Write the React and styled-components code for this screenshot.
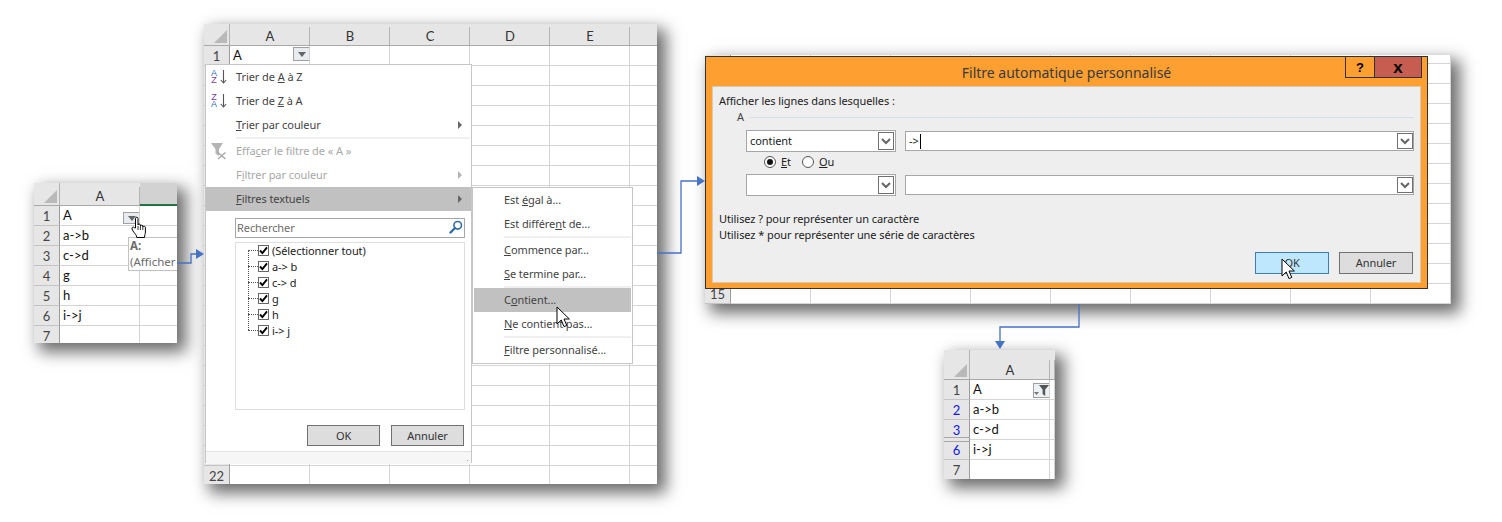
import React from 'react';
import styled, { createGlobalStyle } from 'styled-components';

const UI_FONT = '"Noto Sans", "Open Sans", sans-serif';
const CELL_FONT = 'Lato, "Open Sans", sans-serif';

const GlobalStyle = createGlobalStyle`
  html, body {
    margin: 0;
    padding: 0;
    background: #fff;
  }
`;

const Canvas = styled.div`
  position: relative;
  width: 1502px;
  height: 522px;
  overflow: hidden;
  background: #fff;
  font-family: ${UI_FONT};
`;

const SheetWindow = styled.div`
  position: absolute;
  left: ${props => props.$x}px;
  top: ${props => props.$y}px;
  width: ${props => props.$w}px;
  height: ${props => props.$h}px;
  overflow: hidden;
  background: #fff;
  box-shadow: 7px 7px 15px 2px rgba(0,0,0,.58);
`;

const SheetGrid = styled.div`
  display: grid;
  grid-template-columns: ${props => props.$columns};
  grid-template-rows: ${props => props.$firstRow}px;
  grid-auto-rows: 20px;
  font-family: ${CELL_FONT};
  font-size: 13px;
  color: #111;
`;

const Corner = styled.div`
  position: relative;
  background: #e6e6e6;
  border-bottom: 1px solid #a8a8a8;
  border-right: 1px solid #b4b4b4;
  box-sizing: border-box;

  &::before {
    content: '';
    position: absolute;
    right: 2px;
    bottom: 2px;
    width: 13px;
    height: 13px;
    background: #b9b9b9;
    clip-path: polygon(100% 0, 100% 100%, 0 100%);
  }
`;

const ColumnHeader = styled.div`
  position: relative;
  padding-top: ${props => props.$strip}px;
  box-sizing: border-box;
  display: flex;
  align-items: center;
  justify-content: center;
  background: ${props => props.$selected ? '#d2d2d2' : '#e6e6e6'};
  border-bottom: ${props => props.$selected ? '2px solid #217346' : '1px solid #a8a8a8'};
  color: #333;

  &::after {
    content: '';
    position: absolute;
    right: 0;
    top: ${props => props.$strip}px;
    bottom: 0;
    width: 1px;
    background: #b4b4b4;
  }
`;

// the two lines round a gap of hidden rows are drawn as inset shadows
const RowHeader = styled.div`
  display: flex;
  align-items: center;
  justify-content: center;
  box-sizing: border-box;
  background: #e6e6e6;
  border-right: 1px solid #9c9c9c;
  border-bottom: ${props => props.$gapAfter ? 'none' : '1px solid #c4c4c4'};
  box-shadow: ${props =>
    props.$gapAfter ? 'inset 0 -2px 0 #e6e6e6, inset 0 -3px 0 #a8a8a8'
    : props.$gapBefore ? 'inset 0 1px 0 #e6e6e6, inset 0 2px 0 #a8a8a8'
    : 'none'};
  color: ${props => props.$filtered ? '#1414e6' : '#444'};
`;

const Cell = styled.div`
  display: flex;
  align-items: flex-start;
  box-sizing: border-box;
  padding-left: 3px;
  line-height: 19px;
  white-space: nowrap;
  overflow: hidden;
  border-right: 1px solid #d4d4d4;
  border-bottom: 1px solid #d4d4d4;
`;

const FilterButton = styled.div`
  display: flex;
  align-items: center;
  justify-content: center;
  box-sizing: border-box;
  flex: 0 0 17px;
  height: ${props => props.$height}px;
  margin: ${props => props.$top}px -1px 0 auto;
  background: ${props => props.$active ? '#eef1f3' : '#e8ebef'};
  border: 1px solid #a0a0a0;
`;

const DownTriangle = styled.span`
  width: 0;
  height: 0;
  border-left: 4px solid transparent;
  border-right: 4px solid transparent;
  border-top: 5px solid #666;
`;

const CommentTip = styled.div`
  position: absolute;
  left: 94px;
  top: 54px;
  width: 60px;
  height: 34px;
  box-sizing: border-box;
  padding: 0 0 0 1px;
  background: #fff;
  border: 1px solid #c2c2c2;
  font-family: ${UI_FONT};
  font-size: 11.5px;
  line-height: 16px;
  color: #6d6d6d;
  white-space: nowrap;
`;

const CommentTitle = styled.div`
  font-weight: 700;
`;

const Menu = styled.div`
  position: absolute;
  left: ${props => props.$x}px;
  top: ${props => props.$y}px;
  width: ${props => props.$w}px;
  height: ${props => props.$h}px;
  box-sizing: border-box;
  background: #fff;
  border: 1px solid #c6c6c6;
  font-size: 11px;
  letter-spacing: -.08px;
  color: #444;
`;

const MenuItem = styled.div`
  position: relative;
  display: flex;
  align-items: center;
  box-sizing: border-box;
  height: 24px;
  padding-bottom: 2px;
  white-space: nowrap;
  color: ${props => props.$disabled ? '#a8a8a8' : 'inherit'};
  background: ${props => props.$active ? '#c1c1c1' : 'transparent'};
  margin: ${props => props.$inset ? '0 1px 0 1px' : '0'};
`;

const IconSlot = styled.span`
  flex: 0 0 ${props => props.$width}px;
  display: flex;
  align-items: center;
  gap: 3px;
  padding: 2px 0 0 5px;
  box-sizing: border-box;
`;

const SubArrow = styled.span`
  position: absolute;
  right: 9px;
  top: 8px;
  border-left: 4px solid ${props => props.$disabled ? '#b4b4b4' : '#666'};
  border-top: 4px solid transparent;
  border-bottom: 4px solid transparent;
`;

const Separator = styled.div`
  height: 2px;
  margin-left: ${props => props.$inset}px;
  margin-right: 1px;
  background: #e2e2e2;
  transform: scaleY(.5);
`;

const SortLetters = styled.span`
  display: flex;
  flex-direction: column;
  align-items: center;
  font-family: "Liberation Sans", sans-serif;
  font-size: 9px;
  line-height: 7.5px;
  letter-spacing: 0;
`;

const SortLetter = styled.span`
  color: ${props => props.$purple ? '#7a3e9d' : '#2f6fb5'};
`;

const SearchBox = styled.div`
  display: flex;
  align-items: center;
  justify-content: space-between;
  box-sizing: border-box;
  width: 230px;
  height: 20px;
  margin: 7px 0 0 29px;
  padding: 0 1px 2px 1px;
  border: 1px solid #a6a6a6;
  color: #6d6d6d;
`;

const TreeBox = styled.div`
  position: relative;
  box-sizing: border-box;
  width: 230px;
  height: 168px;
  margin: 4px 0 0 29px;
  border: 1px solid #dedede;
`;

const TreeLine = styled.div`
  position: absolute;
  left: 12px;
  top: 7px;
  height: 80px;
  border-left: 1px dotted #555;
`;

const TreeRows = styled.div`
  margin-top: -1px;
`;

const TreeRow = styled.div`
  display: flex;
  align-items: center;
  height: 16px;
  padding-left: 12px;
  color: #222;
  white-space: nowrap;

  &::before {
    content: '';
    width: 10px;
    border-top: 1px dotted #555;
  }
`;

const CheckBox = styled.span`
  display: flex;
  align-items: center;
  justify-content: center;
  box-sizing: border-box;
  width: 11px;
  height: 11px;
  margin-right: 3px;
  background: #fff;
  border: 1px solid #666;
`;

const MenuButtons = styled.div`
  display: flex;
  justify-content: flex-end;
  gap: 11px;
  margin: 15px 7px 0 0;
`;

const PushButton = styled.div`
  display: flex;
  align-items: center;
  justify-content: center;
  box-sizing: border-box;
  width: ${props => props.$w}px;
  height: ${props => props.$height}px;
  padding-bottom: 1px;
  font-size: 11px;
  color: #333;
  background: ${props => props.$hot ? '#bee6fd' : '#dddddd'};
  border: 1px solid ${props => props.$hot ? '#3c7fb1' : '#707070'};
`;

const GripBar = styled.div`
  position: relative;
  height: 12px;
  margin-top: 5px;
  background: #f6f6f6;
  border-top: 1px solid #e2e2e2;
`;

const Grip = styled.span`
  position: absolute;
  right: 1px;
  bottom: 1px;
  width: 7px;
  height: 7px;
  background: radial-gradient(circle, #9a9a9a 1px, transparent 1px) 0 0 / 3px 3px;
  clip-path: polygon(100% 0, 100% 100%, 0 100%);
`;

const Dialog = styled.div`
  position: absolute;
  left: 705px;
  top: 56px;
  width: 723px;
  height: 233px;
  box-sizing: border-box;
  background: #fd9f31;
  border: 1px solid #333;
  display: flex;
  flex-direction: column;
`;

const TitleBar = styled.div`
  position: relative;
  flex: 0 0 30px;
  display: flex;
  align-items: center;
  justify-content: center;
  font-size: 14px;
  color: #3a3a3a;
`;

const TitleButtons = styled.div`
  position: absolute;
  top: 0;
  right: 5px;
  display: flex;
  height: 21px;
  border: 1px solid #333;
  border-top: none;
  box-sizing: border-box;
`;

const TitleButton = styled.div`
  display: flex;
  align-items: center;
  justify-content: center;
  box-sizing: border-box;
  width: ${props => props.$w}px;
  background: ${props => props.$close ? '#c65d50' : 'transparent'};
  border-left: ${props => props.$close ? '1px solid #333' : 'none'};
  font-family: "Liberation Sans", sans-serif;
  font-size: ${props => props.$close ? '17px' : '13px'};
  line-height: 1;
  font-weight: 700;
  color: #000;
`;

const Panel = styled.div`
  flex: 1;
  margin: 0 7px 6px;
  padding: 6px 6px 0;
  background: #eeeeee;
  box-shadow: 0 0 0 1px #d8c9b4;
  font-size: 11px;
  letter-spacing: -.08px;
  line-height: 16px;
  color: #222;
`;

const Legend = styled.div`
  display: flex;
  align-items: center;
  gap: 5px;
  margin-left: 18px;
  color: #444;

  &::after {
    content: '';
    flex: 1;
    height: 1px;
    background: #d5dfe6;
  }
`;

const CriteriaRow = styled.div`
  display: flex;
  align-items: center;
  gap: 9px;
  margin: ${props => props.$top}px 0 0 27px;
`;

const Combo = styled.div`
  display: flex;
  align-items: center;
  justify-content: space-between;
  box-sizing: border-box;
  width: 150px;
  height: 22px;
  padding: 0 1px 0 3px;
  background: #fff;
  border: 1px solid #a6a6a6;
`;

const TextField = styled.div`
  flex: 1;
  display: flex;
  align-items: center;
  box-sizing: border-box;
  height: 20px;
  padding-left: 3px;
  background: #fff;
  border: 1px solid #a6a6a6;
`;

const Caret = styled.span`
  width: 1px;
  height: 15px;
  margin-left: 1px;
  background: #000;
`;

const DropButton = styled.span`
  display: flex;
  align-items: center;
  justify-content: center;
  box-sizing: border-box;
  width: ${props => props.$w}px;
  height: ${props => props.$h}px;
  margin-left: auto;
  background: #fff;
  border: 1px solid #707070;
`;

const RadioRow = styled.div`
  display: flex;
  align-items: center;
  height: 20px;
  margin-left: 45px;
`;

const Radio = styled.span`
  display: flex;
  align-items: center;
  justify-content: center;
  box-sizing: border-box;
  width: 12px;
  height: 12px;
  margin-right: 5px;
  background: #fff;
  border: 1px solid #555;
  border-radius: 50%;

  &::after {
    content: '';
    display: ${props => props.$checked ? 'block' : 'none'};
    width: 6px;
    height: 6px;
    border-radius: 50%;
    background: #111;
  }
`;

const RadioLabel = styled.span`
  margin-right: ${props => props.$gap || 0}px;
`;

const Notes = styled.div`
  margin-top: 15px;
`;

const DialogButtons = styled.div`
  display: flex;
  justify-content: flex-end;
  gap: 10px;
  margin: 9px 1px 0 0;
`;

const Overlay = styled.svg`
  position: absolute;
  left: ${props => props.$x}px;
  top: ${props => props.$y}px;
  overflow: visible;
  pointer-events: none;
`;

const sortIcon = (top, bottom, topPurple) => (
  <IconSlot $width={30}>
    <SortLetters>
      <SortLetter $purple={topPurple}>{top}</SortLetter>
      <SortLetter $purple={!topPurple}>{bottom}</SortLetter>
    </SortLetters>
    <svg width="7" height="14" viewBox="0 0 7 14">
      <path d="M3.5 0v13M.8 10l2.7 3 2.7-3" fill="none" stroke="#555" strokeWidth="1.1" />
    </svg>
  </IconSlot>
);

const ClearFilterIcon = () => (
  <IconSlot $width={30}>
    <svg width="16" height="17" viewBox="0 0 16 17">
      <path d="M0 0h12L8 6v7L4.5 10.5V6z" fill="#b4b4b4" />
      <path d="M7 9.5l7.5 6.5M14.5 9.5L7 16" stroke="#a8a8a8" strokeWidth="1.4" />
    </svg>
  </IconSlot>
);

const SearchIcon = () => (
  <svg width="14" height="14" viewBox="0 0 14 14">
    <circle cx="8.7" cy="5.3" r="3.8" fill="none" stroke="#2f6ea5" strokeWidth="1.6" />
    <path d="M6 8L1.5 12.5" stroke="#2f6ea5" strokeWidth="2.4" strokeLinecap="round" />
  </svg>
);

const CheckMark = () => (
  <svg width="9" height="9" viewBox="0 0 9 9">
    <path d="M1 4.5l2.4 2.6L8 1.4" fill="none" stroke="#000" strokeWidth="1.9" />
  </svg>
);

const Chevron = () => (
  <svg width="10" height="7" viewBox="0 0 10 7">
    <path d="M1 1l4 4 4-4" fill="none" stroke="#666" strokeWidth="2" />
  </svg>
);

const ActiveFilterIcon = () => (
  <svg width="15" height="11" viewBox="0 0 15 11">
    <path d="M5 0h10l-3.8 4.4V11L8.6 9V4.4z" fill="#555" />
    <path d="M0 7h5L2.5 10z" fill="#777" />
  </svg>
);

const ArrowCursor = ({ x, y }) => (
  <Overlay $x={x} $y={y} width="14" height="22" viewBox="0 0 14 22">
    <path d="M1 1v17l4.2-4 2.8 6.6 2.8-1.2-2.8-6.4H13.4z" fill="#fff" stroke="#000" strokeWidth="1" />
  </Overlay>
);

const HandCursor = ({ x, y }) => (
  <Overlay $x={x} $y={y} width="17" height="23" viewBox="0 0 17 23">
    <path
      d="M4.5 12V2.5C4.5.8 7 .8 7 2.5V9C7 7.8 9.4 7.8 9.4 9v1c0-1.1 2.4-1.1 2.4 0v1c0-1 2.6-1 2.6.3V16c0 2.2-.9 3-.9 5.5H5.8C5.8 19 3.6 17.6 2 15l-1-2c-.7-1.6 1.4-2.6 2.3-1.3z"
      fill="#fff"
      stroke="#000"
      strokeWidth="1"
    />
    <path d="M7 10v4M9.4 10v4M11.8 11v3" stroke="#000" strokeWidth=".8" />
  </Overlay>
);

const Connector = ({ d, arrow }) => (
  <>
    <path d={d} fill="none" stroke="#4472c4" strokeWidth="1.3" />
    <polygon points={arrow} fill="#4472c4" />
  </>
);

// one block of cells, the same shape for every sheet in the picture
const Sheet = ({ x, y, w, h, columns, headerHeight, strip, labels, rows, selectedFrom, firstRow, children }) => (
  <SheetWindow $x={x} $y={y} $w={w} $h={h}>
    <SheetGrid $columns={columns} $firstRow={firstRow || headerHeight}>
      {headerHeight && <Corner />}
      {headerHeight && labels.map((label, i) => (
        <ColumnHeader
          key={i}
          $strip={strip}
          $selected={selectedFrom !== undefined && i >= selectedFrom}
        >
          {label}
        </ColumnHeader>
      ))}
      {rows.map((row, r) => (
        <React.Fragment key={r}>
          <RowHeader $filtered={row.filtered} $gapAfter={row.gapAfter} $gapBefore={row.gapBefore}>
            {row.num}
          </RowHeader>
          {labels.map((_, c) => (
            <Cell key={c}>
              {row.cells && row.cells[c]}
            </Cell>
          ))}
        </React.Fragment>
      ))}
    </SheetGrid>
    {children}
  </SheetWindow>
);

const range = (from, to) => {
  const out = [];
  for (let i = from; i <= to; i++) out.push({ num: i });
  return out;
};

const plainButton = (top, height) => (
  <FilterButton $top={top} $height={height}><DownTriangle /></FilterButton>
);

const firstRows = [
  { num: 1, cells: [<React.Fragment key="a">A{plainButton(6, 12)}</React.Fragment>] },
  { num: 2, cells: ['a->b'] },
  { num: 3, cells: ['c->d'] },
  { num: 4, cells: ['g'] },
  { num: 5, cells: ['h'] },
  { num: 6, cells: ['i->j'] },
  { num: 7 },
];

const secondRows = [
  { num: 1, cells: [<React.Fragment key="a">A{plainButton(1, 14)}</React.Fragment>] },
  ...range(2, 22),
];

const behindRows = [
  ...Array.from({ length: 12 }, () => ({ num: '' })),
  { num: 15 },
];

const resultRows = [
  {
    num: 1,
    cells: [
      <React.Fragment key="a">
        A
        <FilterButton $top={3} $height={15} $active><ActiveFilterIcon /></FilterButton>
      </React.Fragment>,
    ],
  },
  { num: 2, filtered: true, cells: ['a->b'] },
  { num: 3, filtered: true, gapAfter: true, cells: ['c->d'] },
  { num: 6, filtered: true, gapBefore: true, cells: ['i->j'] },
  { num: 7 },
];

const treeItems = ['(Sélectionner tout)', 'a-> b', 'c-> d', 'g', 'h', 'i-> j'];

const App = () => (
  <Canvas>
    <GlobalStyle />

    <Sheet
      x={34} y={183} w={143} h={160}
      columns="26px 80px 60px"
      headerHeight={23}
      strip={4}
      labels={['A', '']}
      selectedFrom={1}
      rows={firstRows}
    >
      <CommentTip>
        <CommentTitle>A:</CommentTitle>
        (Afficher
      </CommentTip>
    </Sheet>
    <HandCursor x={131} y={216} />

    <Sheet
      x={204} y={24} w={453} h={460}
      columns="26px repeat(6, 80px)"
      headerHeight={22}
      strip={3}
      labels={['A', 'B', 'C', 'D', 'E', '']}
      rows={secondRows}
    />

    <Menu $x={205} $y={64} $w={267} $h={399}>
      <MenuItem>{sortIcon('A', 'Z', false)}<span>Trier de <u>A</u> à Z</span></MenuItem>
      <MenuItem>{sortIcon('Z', 'A', true)}<span>Trier de <u>Z</u> à A</span></MenuItem>
      <MenuItem>
        <IconSlot $width={30} /><span><u>T</u>rier par couleur</span><SubArrow />
      </MenuItem>
      <Separator $inset={30} />
      <MenuItem $disabled><ClearFilterIcon /><span>Effa<u>c</u>er le filtre de « A »</span></MenuItem>
      <MenuItem $disabled>
        <IconSlot $width={30} /><span>F<u>i</u>ltrer par couleur</span><SubArrow $disabled />
      </MenuItem>
      <MenuItem $active>
        <IconSlot $width={30} /><span><u>F</u>iltres textuels</span><SubArrow />
      </MenuItem>
      <SearchBox>Rechercher<SearchIcon /></SearchBox>
      <TreeBox>
        <TreeLine />
        <TreeRows>
          {treeItems.map(item => (
            <TreeRow key={item}>
              <CheckBox><CheckMark /></CheckBox>
              {item}
            </TreeRow>
          ))}
        </TreeRows>
      </TreeBox>
      <MenuButtons>
        <PushButton $w={73} $height={21}>OK</PushButton>
        <PushButton $w={73} $height={21}>Annuler</PushButton>
      </MenuButtons>
      <GripBar><Grip /></GripBar>
    </Menu>

    <Menu $x={472} $y={187} $w={161} $h={177}>
      <MenuItem><IconSlot $width={31} /><span>Est <u>é</u>gal à...</span></MenuItem>
      <MenuItem><IconSlot $width={31} /><span>Est différe<u>n</u>t de...</span></MenuItem>
      <Separator $inset={31} />
      <MenuItem><IconSlot $width={31} /><span><u>C</u>ommence par...</span></MenuItem>
      <MenuItem><IconSlot $width={31} /><span><u>S</u>e termine par...</span></MenuItem>
      <Separator $inset={31} />
      <MenuItem $active $inset><IconSlot $width={30} /><span>C<u>o</u>ntient...</span></MenuItem>
      <MenuItem><IconSlot $width={31} /><span><u>N</u>e contient pas...</span></MenuItem>
      <Separator $inset={31} />
      <MenuItem><IconSlot $width={31} /><span><u>F</u>iltre personnalisé...</span></MenuItem>
    </Menu>
    <ArrowCursor x={556} y={306} />

    <Sheet
      x={705} y={55} w={746} h={249}
      columns="26px repeat(9, 80px)"
      firstRow={9}
      labels={['', '', '', '', '', '', '', '', '']}
      rows={behindRows}
    />

    <Dialog>
      <TitleBar>
        Filtre automatique personnalisé
        <TitleButtons>
          <TitleButton $w={28}>?</TitleButton>
          <TitleButton $w={47} $close>x</TitleButton>
        </TitleButtons>
      </TitleBar>
      <Panel>
        <div>Afficher les lignes dans lesquelles :</div>
        <Legend>A</Legend>
        <CriteriaRow $top={5}>
          <Combo>contient<DropButton $w={16} $h={18}><Chevron /></DropButton></Combo>
          <TextField>-&gt;<Caret /><DropButton $w={16} $h={16}><Chevron /></DropButton></TextField>
        </CriteriaRow>
        <RadioRow>
          <Radio $checked /><RadioLabel $gap={11}><u>E</u>t</RadioLabel>
          <Radio /><RadioLabel><u>O</u>u</RadioLabel>
        </RadioRow>
        <CriteriaRow $top={2}>
          <Combo><DropButton $w={16} $h={18}><Chevron /></DropButton></Combo>
          <TextField><DropButton $w={16} $h={16}><Chevron /></DropButton></TextField>
        </CriteriaRow>
        <Notes>
          <div>Utilisez ? pour représenter un caractère</div>
          <div>Utilisez * pour représenter une série de caractères</div>
        </Notes>
        <DialogButtons>
          <PushButton $w={74} $height={22} $hot>OK</PushButton>
          <PushButton $w={74} $height={22}>Annuler</PushButton>
        </DialogButtons>
      </Panel>
    </Dialog>
    <ArrowCursor x={1281} y={258} />

    <Sheet
      x={944} y={350} w={111} h={129}
      columns="26px 80px 5px"
      headerHeight={30}
      strip={10}
      labels={['A', '']}
      rows={resultRows}
    />

    <Overlay $x={0} $y={0} width="1502" height="522">
      <Connector d="M177 263H191V254H197" arrow="196,249 204,254 196,259" />
      <Connector d="M657 253H681V181H698" arrow="697,176 705,181 697,186" />
      <Connector d="M1079 304V327H1000V342" arrow="995,341 1005,341 1000,349" />
    </Overlay>
  </Canvas>
);

export default App;
